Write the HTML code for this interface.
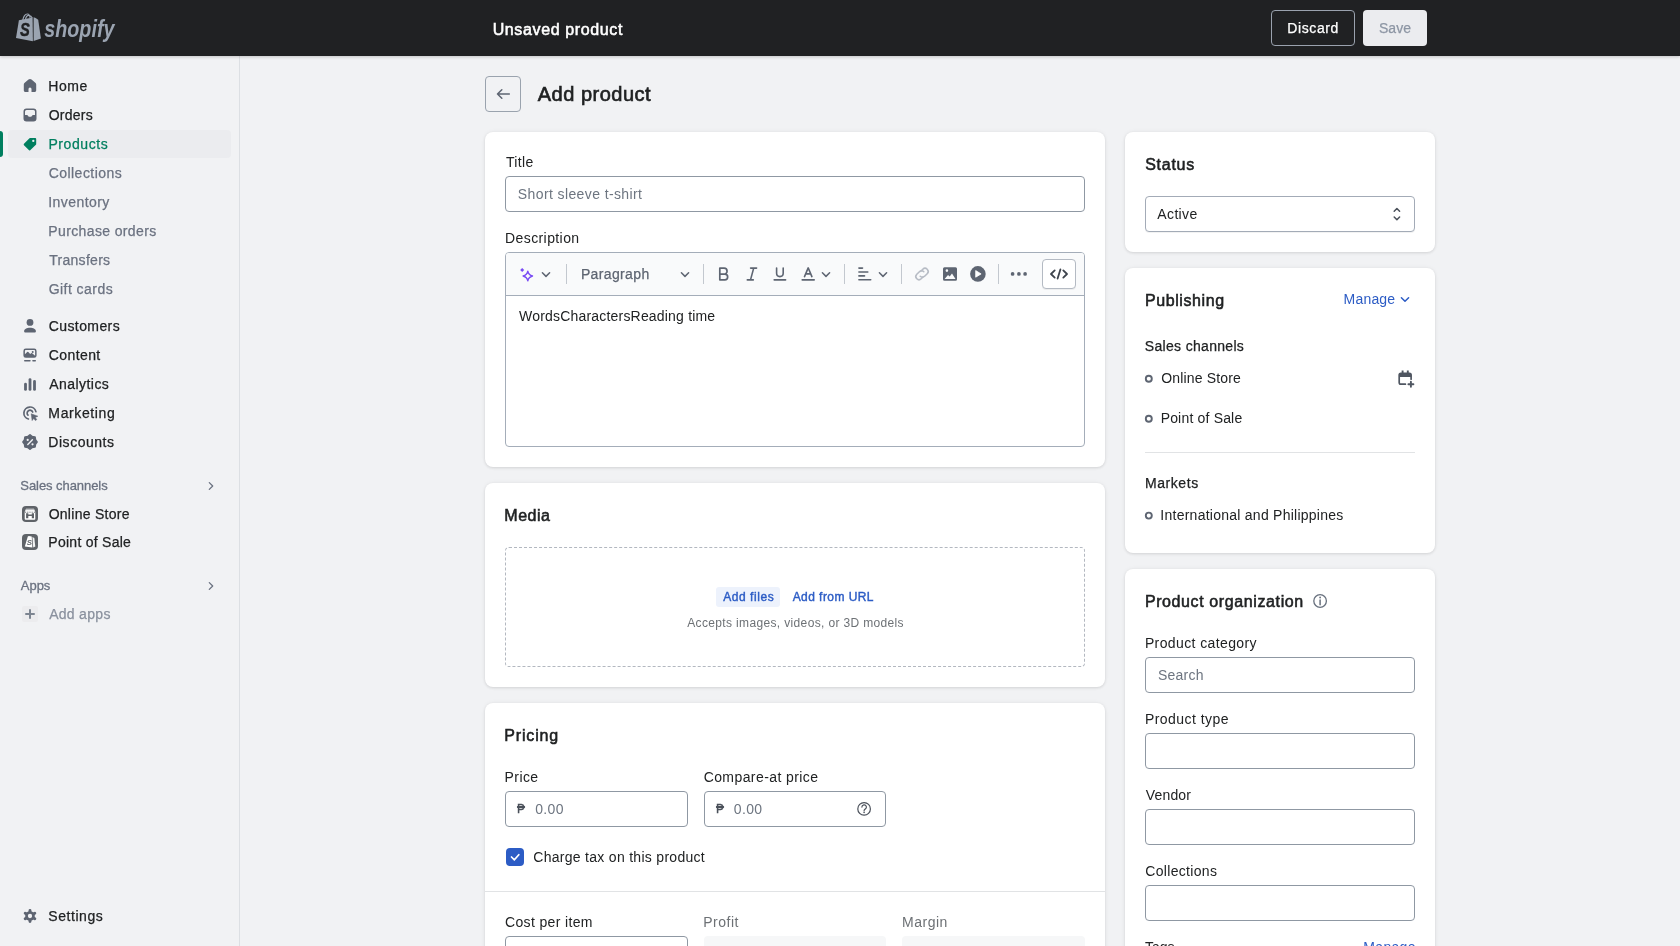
<!DOCTYPE html>
<html lang="en">
<head>
<meta charset="utf-8">
<title>Add product</title>
<style>
*{box-sizing:border-box;margin:0;padding:0}
html,body{width:1680px;height:946px;overflow:hidden;background:#f1f2f4}
body{font-family:"Liberation Sans",sans-serif;font-size:14px;color:#202223;position:relative;-webkit-font-smoothing:antialiased;will-change:transform}
.abs{position:absolute}
.t{position:absolute;white-space:nowrap;line-height:20px;font-size:14px}
.med{-webkit-text-stroke:.25px currentColor}
.sb{font-weight:normal;-webkit-text-stroke:.55px currentColor}
/* topbar */
#top{position:absolute;left:0;top:0;width:1680px;height:56px;background:#202123;box-shadow:0 1px 3px rgba(0,0,0,.19);z-index:5}
.btn{position:absolute;top:10px;height:36px;border-radius:4px;font-size:14px;line-height:34px;text-align:center}
/* sidebar */
#side{position:absolute;left:0;top:56px;width:240px;height:890px;background:#f1f2f4;border-right:1px solid #dcdfe3}
.nav{position:absolute;left:48px;font-size:14px;line-height:20px;white-space:nowrap;color:#202223;letter-spacing:.35px}
.nav.sub{color:#6b7280}
.nav.sec{font-size:13px;color:#6b7280;letter-spacing:.2px;-webkit-text-stroke:.3px currentColor}
.ico{position:absolute;left:20px;width:20px;height:20px}
.ico svg{display:block;width:20px;height:20px;fill:#5e6572}
/* cards */
.card{position:absolute;background:#fff;border-radius:8px;box-shadow:0 0 5px rgba(23,24,24,.05),0 1px 3px rgba(0,0,0,.10)}
.inp{position:absolute;height:36px;border:1px solid #8f98a3;border-radius:4px;background:#fff}
.h2{position:absolute;font-size:16px;line-height:24px;font-weight:normal;-webkit-text-stroke:.55px currentColor;white-space:nowrap;color:#202223}
.ph{color:#6d7580}
</style>
</head>
<body>

<!-- TOPBAR -->
<div id="top">
  <div id="logo" class="abs" style="left:16px;top:13px;width:102px;height:30px">
    <svg class="abs" style="left:0;top:0;width:25px;height:29px" viewBox="0 0 25 29">
      <path fill="#9ba4b1" d="M2.900 7.300L16.600 4.500 16.900 28.200 0 24.900z"/>
      <path fill="#9ba4b1" d="M17.600 4.300l2 .6 2.600 1.800 2.700 18.900-7.300 2.500z"/>
      <path fill="none" stroke="#9ba4b1" stroke-width="1.200" d="M6.800 7.200C7.300 3.600 9.400.9 11.400 1c1.500.1 2.500 1.600 2.700 3.900M9.400 6.600c.5-2.700 2-4.400 3.400-4.300 1.800.2 2.900 1.300 3.400 2.700"/>
      <text x="4.100" y="23.100" font-family="Liberation Sans" font-weight="bold" font-style="italic" font-size="18.600" textLength="9.800" lengthAdjust="spacingAndGlyphs" fill="#202123" stroke="#202123" stroke-width=".4">S</text>
    </svg>
    <svg class="abs" style="left:28px;top:0;width:78px;height:32px" viewBox="0 0 78 32"><text id="lgt" x="0.200" y="23.900" font-family="Liberation Sans" font-size="23.500" font-weight="bold" font-style="italic" textLength="70.300" lengthAdjust="spacingAndGlyphs" fill="#9ba4b1">shopify</text></svg>
  </div>
  <div class="t sb" id="tb1" style="left:492.63px;letter-spacing:0.63px;top:18px;font-size:16px;line-height:24px;color:#fff">Unsaved product</div>
  <div class="btn" style="left:1271px;width:84px;border:1px solid #9aa2ae"></div>
  <div class="t med" id="tb2" style="left:1287.35px;letter-spacing:0.60px;top:18px;color:#fff">Discard</div>
  <div class="btn" style="left:1363px;width:64px;background:#ebecef"></div>
  <div class="t med" id="tb3" style="left:1378.98px;letter-spacing:0.03px;top:18px;color:#8d96a4">Save</div>
</div>

<!-- SIDEBAR -->
<div id="side">
  <!-- selected -->
  <div class="abs" style="left:0;top:75px;width:3px;height:26px;background:#007f5f;border-radius:0 3px 3px 0"></div>
  <div class="abs" style="left:8px;top:74px;width:223px;height:28px;background:#ebecef;border-radius:4px"></div>

  <div class="ico" style="top:20px"><svg viewBox="0 0 20 20"><path d="M10 3c.6 0 1 .2 1.500.6l3.800 3.100c.6.500.9 1.100.9 1.900v5.700c0 1.100-.7 1.800-1.800 1.800h-8.800c-1.100 0-1.800-.7-1.800-1.800v-5.700c0-.8.300-1.400.9-1.900l3.800-3.100c.500-.4.900-.6 1.500-.6z"/><path d="M8.500 16.300v-3.200a1.500 1.500 0 0 1 3 0v3.200z" fill="#f1f2f4"/></svg></div>
  <div class="nav med" id="n1" style="left:48.35px;letter-spacing:0.51px;top:20px">Home</div>

  <div class="ico" style="top:49px"><svg viewBox="0 0 20 20"><path fill-rule="evenodd" d="M6.500 3.500h7a3 3 0 0 1 3 3v7a3 3 0 0 1-3 3h-7a3 3 0 0 1-3-3v-7a3 3 0 0 1 3-3zm0 1.500a1.500 1.500 0 0 0-1.500 1.500v3.500h2.100a.8.8 0 0 1 .7.4l.5.9a.8.8 0 0 0 .7.4h2a.8.8 0 0 0 .7-.4l.5-.9a.8.8 0 0 1 .7-.4h2.100v-3.500a1.500 1.500 0 0 0-1.500-1.500z"/></svg></div>
  <div class="nav med" id="n2" style="left:48.64px;letter-spacing:0.27px;top:49px">Orders</div>

  <div class="ico" style="top:78px"><svg viewBox="0 0 20 20" style="fill:#007f5f"><path d="M10.200 5h5v5l-5.700 5.400-4.800-4.900z" stroke="#007f5f" stroke-width="2" stroke-linejoin="round"/><circle cx="13.300" cy="6.900" r="1.150" fill="#ebecef"/></svg></div>
  <div class="nav med" id="n3" style="left:48.40px;letter-spacing:0.58px;top:78px;color:#007f5f">Products</div>

  <div class="nav sub med" id="n4" style="left:48.64px;letter-spacing:0.47px;top:107px">Collections</div>
  <div class="nav sub med" id="n5" style="left:48.20px;letter-spacing:0.45px;top:136px">Inventory</div>
  <div class="nav sub med" id="n6" style="left:48.30px;letter-spacing:0.37px;top:165px">Purchase orders</div>
  <div class="nav sub med" id="n7" style="left:49.19px;letter-spacing:0.29px;top:194px">Transfers</div>
  <div class="nav sub med" id="n8" style="left:48.65px;letter-spacing:0.46px;top:223px">Gift cards</div>

  <div class="ico" style="top:260px"><svg viewBox="0 0 20 20"><circle cx="10" cy="6.400" r="3.400"/><path d="M4.100 15.300c0-2.200 2.600-3.600 5.900-3.600s5.900 1.400 5.900 3.600c0 .8-.6 1.300-1.400 1.300h-9c-.8 0-1.400-.5-1.400-1.300z"/></svg></div>
  <div class="nav med" id="n9" style="left:48.71px;letter-spacing:0.41px;top:260px">Customers</div>

  <div class="ico" style="top:289px"><svg viewBox="0 0 20 20"><path fill-rule="evenodd" d="M5.800 3.500h8.400a2.400 2.400 0 0 1 2.400 2.400v4.500a2.400 2.400 0 0 1-2.400 2.400h-8.400a2.400 2.400 0 0 1-2.400-2.400v-4.500a2.400 2.400 0 0 1 2.400-2.400zm0 1.500a.9.900 0 0 0-.9.900v3.300l2.300-2.100a.8.8 0 0 1 1.100 0l1.900 1.900.9-.8a.8.8 0 0 1 1.100 0l2.900 2.600v-4.900a.9.900 0 0 0-.9-.9zm6.900.9a1 1 0 1 1 0 2 1 1 0 0 1 0-2z"/><rect x="4" y="14.900" width="6.700" height="1.500" rx=".75"/><rect x="12.200" y="14.900" width="3.800" height="1.500" rx=".75"/></svg></div>
  <div class="nav med" id="n10" style="left:48.71px;letter-spacing:0.42px;top:289px">Content</div>

  <div class="ico" style="top:318px"><svg viewBox="0 0 20 20"><rect x="4.100" y="8.800" width="2.800" height="8" rx="1.400"/><rect x="8.600" y="4.200" width="2.800" height="12.600" rx="1.400"/><rect x="13.100" y="6" width="2.800" height="10.800" rx="1.400"/></svg></div>
  <div class="nav med" id="n11" style="left:49.18px;letter-spacing:0.46px;top:318px">Analytics</div>

  <div class="ico" style="top:347px"><svg viewBox="0 0 20 20"><g fill="none" stroke="#5e6572" stroke-width="1.700" stroke-linecap="round"><path d="M8.400 16a6.100 6.100 0 1 1 7.500-7.400"/><path d="M8 12.200a2.900 2.900 0 1 1 4.700-3.200"/></g><path d="M11.200 10.800l6.700 2.400-2.700 1.200 1.600 2.200-1.400 1-1.600-2.200-1.700 2.200z" stroke="#5e6572" stroke-width=".5" stroke-linejoin="round"/></svg></div>
  <div class="nav med" id="n12" style="left:48.37px;letter-spacing:0.62px;top:347px">Marketing</div>

  <div class="ico" style="top:376px"><svg viewBox="0 0 20 20"><path d="M10.00 3.10L12.18 4.73L14.88 5.12L15.27 7.82L16.90 10.00L15.27 12.18L14.88 14.88L12.18 15.27L10.00 16.90L7.82 15.27L5.12 14.88L4.73 12.18L3.10 10.00L4.73 7.82L5.12 5.12L7.82 4.73z" stroke="#5e6572" stroke-width="2" stroke-linejoin="round"/><path d="M7.800 12.400l4.600-4.600" stroke="#f1f2f4" stroke-width="1.400" stroke-linecap="round"/><circle cx="7.700" cy="7.900" r="1.100" fill="#f1f2f4"/><circle cx="12.500" cy="12.300" r="1.100" fill="#f1f2f4"/></svg></div>
  <div class="nav med" id="n13" style="left:48.37px;letter-spacing:0.52px;top:376px">Discounts</div>

  <div class="nav sec med" id="n14" style="left:20.29px;letter-spacing:-0.06px;top:420px">Sales channels</div>
  <svg class="abs" style="left:205px;top:424px;width:12px;height:12px" viewBox="0 0 12 12"><path d="M4.300 2.600L7.700 6 4.300 9.400" fill="none" stroke="#6b7280" stroke-width="1.300" stroke-linecap="round" stroke-linejoin="round"/></svg>

  <div class="abs" style="left:22px;top:450px;width:16px;height:16px;border-radius:4px;background:#5f6368"><svg viewBox="0 0 16 16" style="display:block;width:16px;height:16px"><path fill="#fff" d="M4.100 2.700h7.800l1.400 3v7.300a.8.8 0 0 1-.8.8h-9a.8.8 0 0 1-.8-.8v-7.300z"/><rect x="3.700" y="3.300" width="8.600" height=".8" fill="#a3a6aa"/><path stroke="#5f6368" stroke-width=".9" stroke-dasharray="1.200 1" d="M3 6.200h10" fill="none"/><path fill="#5f6368" d="M4.100 7.300h2.200v1.100h3.500v-1.100h2.200v5h-2.200v-2.300h-3.500v2.300h-2.200z"/></svg></div>
  <div class="nav med" id="n15" style="left:48.64px;letter-spacing:0.28px;top:448px">Online Store</div>

  <div class="abs" style="left:22px;top:478px;width:16px;height:16px;border-radius:4px;background:#5f6368"><svg viewBox="0 0 16 16" style="display:block;width:16px;height:16px"><path fill="#fff" d="M5.800 2.600l1-.6 2.900.6.700 10.900-7.600-.9z"/><path fill="#fff" d="M10.400 3l1.900 1.100 1 8.400-2.100 1z" opacity=".92"/><text x="4.700" y="11.300" font-family="Liberation Sans" font-weight="bold" font-style="italic" font-size="7.800" fill="#5f6368">S</text></svg></div>
  <div class="nav med" id="n16" style="left:48.37px;letter-spacing:0.26px;top:476px">Point of Sale</div>

  <div class="nav sec med" id="n17" style="left:20.82px;letter-spacing:-0.03px;top:520px">Apps</div>
  <svg class="abs" style="left:205px;top:524px;width:12px;height:12px" viewBox="0 0 12 12"><path d="M4.300 2.600L7.700 6 4.300 9.400" fill="none" stroke="#6b7280" stroke-width="1.300" stroke-linecap="round" stroke-linejoin="round"/></svg>

  <div class="abs" style="left:22px;top:550px;width:16px;height:16px;border-radius:2px;background:#ececee"></div>
  <div class="abs" style="left:25px;top:557px;width:10px;height:2px;background:#7d8591;border-radius:1px"></div>
  <div class="abs" style="left:29px;top:553px;width:2px;height:10px;background:#7d8591;border-radius:1px"></div>
  <div class="nav med" id="n18" style="left:49.13px;letter-spacing:0.30px;top:548px;color:#8a919e">Add apps</div>

  <div class="ico" style="top:850px"><svg viewBox="0 0 20 20"><circle cx="10" cy="10" r="4.800"/><path d="M10.00 6.40L10.00 4.45M6.88 8.20L5.19 7.23M6.88 11.80L5.19 12.78M10.00 13.60L10.00 15.55M13.12 11.80L14.81 12.78M13.12 8.20L14.81 7.22" stroke="#5e6572" stroke-width="2.900" stroke-linecap="round" fill="none"/><circle cx="10" cy="10" r="2.150" fill="#f1f2f4"/></svg></div>
  <div class="nav med" id="n19" style="left:48.31px;letter-spacing:0.56px;top:850px">Settings</div>
</div>

<!-- PAGE HEADER -->
<div class="abs" style="left:485px;top:76px;width:36px;height:36px;border:1px solid #9aa3ae;border-radius:4px"></div>
<div class="t sb" id="ph1" style="left:537.77px;letter-spacing:0.50px;-webkit-text-stroke-width:.65px;top:80px;font-size:20px;line-height:28px">Add product</div>

<!-- LEFT COLUMN CARDS -->
<div class="card" id="c1" style="left:485px;top:132px;width:620px;height:335px"></div>
<div class="t" id="m1" style="left:505.91px;letter-spacing:0.36px;top:152px">Title</div>
<div class="inp" style="left:505px;top:176px;width:580px"></div>
<div class="t ph" id="m2" style="left:517.86px;letter-spacing:0.39px;top:184px">Short sleeve t-shirt</div>
<div class="t" id="m3" style="left:505.00px;letter-spacing:0.41px;top:228px">Description</div>
<div class="abs" style="left:505px;top:252px;width:580px;height:195px;border:1px solid #a4adb9;border-radius:4px;background:#fff;overflow:hidden">
  <div class="abs" style="left:0;top:0;width:578px;height:43px;background:#f9fafb;border-bottom:1px solid #a4adb9"></div>
</div>
<div class="t med" id="m4" style="left:580.92px;letter-spacing:0.36px;top:264px;color:#5e6572">Paragraph</div>
<div class="t" id="m5" style="left:519.07px;letter-spacing:0.19px;top:306px">WordsCharactersReading time</div>
<div class="abs" style="left:1042px;top:259px;width:34px;height:30px;border:1px solid #b4bac3;border-radius:4px;background:#fff;box-shadow:0 1px 0 rgba(0,0,0,.05)"></div>
<div class="card" id="c2" style="left:485px;top:483px;width:620px;height:204px"></div>
<div class="h2" id="m6" style="left:504.29px;letter-spacing:0.52px;top:504px">Media</div>
<div class="abs" style="left:505px;top:547px;width:580px;height:120px;border:1px dashed #b3b8c0;border-radius:4px"></div>
<div class="abs" style="left:716px;top:587px;width:64px;height:20px;background:#edf2fc;border-radius:3px"></div>
<div class="t sb" id="m7" style="left:723.14px;letter-spacing:0.57px;-webkit-text-stroke-width:.4px;top:588px;font-size:12px;line-height:18px;color:#2c5cc5">Add files</div>
<div class="t sb" id="m8" style="left:792.67px;letter-spacing:0.44px;-webkit-text-stroke-width:.4px;top:588px;font-size:12px;line-height:18px;color:#2c5cc5">Add from URL</div>
<div class="t" id="m9" style="left:687.25px;letter-spacing:0.35px;top:614px;font-size:12px;line-height:18px;color:#6d7175">Accepts images, videos, or 3D models</div>
<div class="card" id="c3" style="left:485px;top:703px;width:620px;height:300px"></div>
<div class="h2" id="m10" style="left:504.29px;letter-spacing:0.84px;top:724px">Pricing</div>
<div class="t" id="m11" style="left:504.59px;letter-spacing:0.42px;top:767px">Price</div>
<div class="t" id="m12" style="left:703.64px;letter-spacing:0.42px;top:767px">Compare-at price</div>
<div class="inp" style="left:505px;top:791px;width:183px"></div>
<div class="inp" style="left:704px;top:791px;width:182px"></div>
<div class="t" id="m13" style="left:517px;top:799px;font-size:12px;color:#4a505a;-webkit-text-stroke:.35px #4a505a">&#8369;</div>
<div class="t ph" id="m14" style="left:535.13px;letter-spacing:0.40px;top:799px">0.00</div>
<div class="t" id="m15" style="left:716px;top:799px;font-size:12px;color:#4a505a;-webkit-text-stroke:.35px #4a505a">&#8369;</div>
<div class="t ph" id="m16" style="left:733.85px;letter-spacing:0.33px;top:799px">0.00</div>
<div class="abs" style="left:506px;top:848px;width:18px;height:18px;border-radius:4px;background:#2c5cc5"></div>
<div class="t" id="m17" style="left:533.29px;letter-spacing:0.29px;top:847px">Charge tax on this product</div>
<div class="abs" style="left:485px;top:891px;width:620px;height:1px;background:#e1e3e5"></div>
<div class="t" id="m18" style="left:504.97px;letter-spacing:0.36px;top:912px">Cost per item</div>
<div class="t" id="m19" style="left:703.29px;letter-spacing:0.50px;top:912px;color:#6d7175">Profit</div>
<div class="t" id="m20" style="left:902.00px;letter-spacing:0.51px;top:912px;color:#6d7175">Margin</div>
<div class="inp" style="left:505px;top:936px;width:183px"></div>
<div class="abs" style="left:704px;top:936px;width:182px;height:36px;border-radius:4px;background:#f6f7f8"></div>
<div class="abs" style="left:902px;top:936px;width:183px;height:36px;border-radius:4px;background:#f6f7f8"></div>

<!-- RIGHT COLUMN CARDS -->
<div class="card" id="r1" style="left:1125px;top:132px;width:310px;height:120px"></div>
<div class="h2" id="m21" style="left:1145.21px;letter-spacing:0.72px;top:153px">Status</div>
<div class="inp" style="left:1145px;top:196px;width:270px;border-color:#a3abb7;box-shadow:0 1px 0 rgba(0,0,0,.05)"></div>
<div class="t" id="m22" style="left:1157.37px;letter-spacing:0.34px;top:204px">Active</div>
<div class="card" id="r2" style="left:1125px;top:268px;width:310px;height:285px"></div>
<div class="h2" id="m23" style="left:1144.93px;letter-spacing:0.60px;top:289px">Publishing</div>
<div class="t" id="m24" style="left:1343.60px;letter-spacing:0.19px;top:289px;color:#2c5cc5">Manage</div>
<div class="t med" id="m25" style="left:1144.86px;letter-spacing:0.31px;top:336px">Sales channels</div>
<div class="t" id="m26" style="left:1161.18px;letter-spacing:0.17px;top:368px">Online Store</div>
<div class="t" id="m27" style="left:1160.65px;letter-spacing:0.18px;top:408px">Point of Sale</div>
<div class="abs" style="left:1145px;top:452px;width:270px;height:1px;background:#e1e3e5"></div>
<div class="t med" id="m28" style="left:1144.90px;letter-spacing:0.58px;top:473px">Markets</div>
<div class="t" id="m29" style="left:1160.36px;letter-spacing:0.25px;top:505px">International and Philippines</div>
<div class="card" id="r3" style="left:1125px;top:569px;width:310px;height:440px"></div>
<div class="h2" id="m30" style="left:1144.89px;letter-spacing:0.61px;top:590px">Product organization</div>
<div class="t" id="m31" style="left:1144.90px;letter-spacing:0.39px;top:633px">Product category</div>
<div class="inp" style="left:1145px;top:657px;width:270px"></div>
<div class="t ph" id="m32" style="left:1157.96px;letter-spacing:0.23px;top:665px">Search</div>
<div class="t" id="m33" style="left:1144.90px;letter-spacing:0.46px;top:709px">Product type</div>
<div class="inp" style="left:1145px;top:733px;width:270px"></div>
<div class="t" id="m34" style="left:1145.81px;letter-spacing:0.16px;top:785px">Vendor</div>
<div class="inp" style="left:1145px;top:809px;width:270px"></div>
<div class="t" id="m35" style="left:1145.29px;letter-spacing:0.32px;top:861px">Collections</div>
<div class="inp" style="left:1145px;top:885px;width:270px"></div>
<div class="t" id="m36" style="left:1145px;top:937px">Tags</div>
<div class="t" id="m37" style="left:1363.36px;letter-spacing:0.30px;top:937px;color:#2c5cc5">Manage</div>


<!-- ICON OVERLAY (page coordinates) -->
<svg class="abs" style="left:0;top:0;width:1680px;height:946px;z-index:4;pointer-events:none" viewBox="0 0 1680 946">
  <!-- back arrow -->
  <path d="M509.300 94H497.500M501.800 89.700L497.500 94l4.300 4.300" fill="none" stroke="#5e6572" stroke-width="1.500" stroke-linecap="round" stroke-linejoin="round"/>
  <!-- toolbar: sparkle -->
  <path d="M522.200 268.100l2 2-2 2-2-2z" fill="#7a4cf4"/>
  <path d="M527.800 271.100c.5 2.600 1.800 4.100 4.700 4.900-2.900.8-4.200 2.300-4.700 4.900-.5-2.600-1.800-4.100-4.700-4.900 2.900-.8 4.200-2.300 4.700-4.900z" fill="none" stroke="#7a4cf4" stroke-width="1.400" stroke-linejoin="round"/>
  <path d="M542.4 272.8L546 276.40000000000003L549.6 272.8" fill="none" stroke="#5e6572" stroke-width="1.500" stroke-linecap="round" stroke-linejoin="round"/>
  <rect x="566" y="264" width="1" height="20" fill="#c3c8cf"/>
  <path d="M681.4 272.8L685 276.40000000000003L688.6 272.8" fill="none" stroke="#5e6572" stroke-width="1.500" stroke-linecap="round" stroke-linejoin="round"/>
  <rect x="703" y="264" width="1" height="20" fill="#c3c8cf"/>
  <!-- B -->
  <path d="M719.800 268.200h4.300a2.950 2.950 0 0 1 0 5.900h-4.300zM719.800 274.100h5a2.850 2.850 0 0 1 0 5.700h-5z" fill="none" stroke="#5e6572" stroke-width="1.700" stroke-linejoin="round"/>
  <!-- I -->
  <path d="M750.600 268.100h6M747.300 279.900h6M753.700 268.100l-3.200 11.800" fill="none" stroke="#5e6572" stroke-width="1.600" stroke-linecap="round"/>
  <!-- U -->
  <path d="M776.600 268v5.300a3.300 3.300 0 0 0 6.600 0V268" fill="none" stroke="#5e6572" stroke-width="1.600" stroke-linecap="round"/>
  <rect x="773.400" y="279" width="13" height="1.700" rx=".85" fill="#5e6572"/>
  <!-- A -->
  <path d="M804.500 276.600l3.700-8.700 3.700 8.700M805.700 273.900h5" fill="none" stroke="#5e6572" stroke-width="1.600" stroke-linecap="round" stroke-linejoin="round"/>
  <rect x="801.400" y="279" width="13.600" height="1.700" rx=".85" fill="#5e6572"/>
  <path d="M822.4 272.8L826 276.40000000000003L829.6 272.8" fill="none" stroke="#5e6572" stroke-width="1.500" stroke-linecap="round" stroke-linejoin="round"/>
  <rect x="844" y="264" width="1" height="20" fill="#c3c8cf"/>
  <!-- align -->
  <g fill="#5e6572"><rect x="858.100" y="267.300" width="5.200" height="1.600" rx=".8"/><rect x="858.100" y="271.200" width="10.500" height="1.600" rx=".8"/><rect x="858.100" y="275.100" width="7.200" height="1.600" rx=".8"/><rect x="858.100" y="279" width="13.400" height="1.600" rx=".8"/></g>
  <path d="M879.4 272.8L883 276.40000000000003L886.6 272.8" fill="none" stroke="#5e6572" stroke-width="1.500" stroke-linecap="round" stroke-linejoin="round"/>
  <rect x="901" y="264" width="1" height="20" fill="#c3c8cf"/>
  <!-- link (disabled) -->
  <g fill="none" stroke="#b7bcc5" stroke-width="1.600" stroke-linecap="round"><path d="M920.800 271.300l2-2a3.100 3.100 0 0 1 4.400 4.400l-2.600 2.600a3.100 3.100 0 0 1-4.400 0"/><path d="M923.200 276.700l-2 2a3.100 3.100 0 0 1-4.400-4.400l2.600-2.600a3.100 3.100 0 0 1 4.400 0"/></g>
  <!-- image -->
  <path fill-rule="evenodd" fill="#5e6572" d="M944.500 267.200h11a1.500 1.500 0 0 1 1.500 1.500v10.600a1.500 1.500 0 0 1-1.500 1.500h-11a1.500 1.500 0 0 1-1.500-1.500v-10.600a1.500 1.500 0 0 1 1.500-1.500zm2.400 2.100a1.300 1.300 0 1 0 0 2.600 1.300 1.300 0 0 0 0-2.600zm-2.300 9.600h10.900l-3.500-5.300-2.300 3-1.700-1.600z"/>
  <!-- play -->
  <circle cx="977.900" cy="273.900" r="7.800" fill="#5e6572"/>
  <path d="M975.700 270.600v6.600l5.400-3.300z" fill="#fff" stroke="#fff" stroke-width=".8" stroke-linejoin="round"/>
  <rect x="998" y="264" width="1" height="20" fill="#c3c8cf"/>
  <!-- ellipsis -->
  <g fill="#5e6572"><circle cx="1012.600" cy="273.900" r="1.850"/><circle cx="1018.900" cy="273.900" r="1.850"/><circle cx="1025.100" cy="273.900" r="1.850"/></g>
  <!-- code -->
  <path d="M1054.700 270.400l-3.700 3.600 3.700 3.600M1063.300 270.400l3.700 3.600-3.700 3.600M1060.400 269.400l-2.800 9.200" fill="none" stroke="#3d434c" stroke-width="1.800" stroke-linecap="round" stroke-linejoin="round"/>
  <!-- checkbox tick -->
  <path d="M511.500 857l2.900 2.800 4.400-5.100" fill="none" stroke="#fff" stroke-width="1.700" stroke-linecap="round" stroke-linejoin="round"/>
  <!-- help icon -->
  <circle cx="864.100" cy="808.900" r="6.300" fill="none" stroke="#4a505a" stroke-width="1.200"/>
  <path d="M861.900 807.100a2.250 2.250 0 1 1 3.300 2c-.7.400-1.100.8-1.100 1.600" fill="none" stroke="#4a505a" stroke-width="1.200" stroke-linecap="round"/>
  <circle cx="864.100" cy="812.400" r=".8" fill="#4a505a"/>
  <!-- select arrows -->
  <path d="M1394.200 211.200l2.700-2.700 2.700 2.700M1394.200 217l2.700 2.700 2.700-2.700" fill="none" stroke="#4a505a" stroke-width="1.500" stroke-linecap="round" stroke-linejoin="round"/>
  <!-- manage chevron -->
  <path d="M1401.4 297.7L1405 301.3L1408.6 297.7" fill="none" stroke="#2c5cc5" stroke-width="1.500" stroke-linecap="round" stroke-linejoin="round"/>
  <!-- bullets -->
  <circle cx="1148.800" cy="378.7" r="3" fill="none" stroke="#5e6572" stroke-width="1.900"/><circle cx="1148.800" cy="418.7" r="3" fill="none" stroke="#5e6572" stroke-width="1.900"/><circle cx="1148.800" cy="515.6" r="3" fill="none" stroke="#5e6572" stroke-width="1.900"/>
  <!-- calendar -->
  <path d="M1411.100 379.200v-4.100a1.700 1.700 0 0 0-1.700-1.700h-8.500a1.700 1.700 0 0 0-1.700 1.700v7.400a1.700 1.700 0 0 0 1.700 1.700h4.500" fill="none" stroke="#4f5661" stroke-width="1.700" stroke-linecap="round"/>
  <path d="M1399.200 373.400h11.900v3.600h-11.900z" fill="#4f5661"/>
  <path d="M1402.600 370.500v3M1407.800 370.500v3" stroke="#4f5661" stroke-width="1.900" stroke-linecap="butt"/>
  <path d="M1410.900 381.700v5M1408.400 384.200h5" stroke="#4f5661" stroke-width="1.900" stroke-linecap="round"/>
  <!-- info icon -->
  <circle cx="1320.100" cy="601" r="6.300" fill="none" stroke="#68717e" stroke-width="1.300"/>
  <path d="M1320.100 600v4.700" stroke="#68717e" stroke-width="1.500" stroke-linecap="round"/>
  <circle cx="1320.100" cy="597.500" r=".9" fill="#68717e"/>
</svg>
</body>
</html>
